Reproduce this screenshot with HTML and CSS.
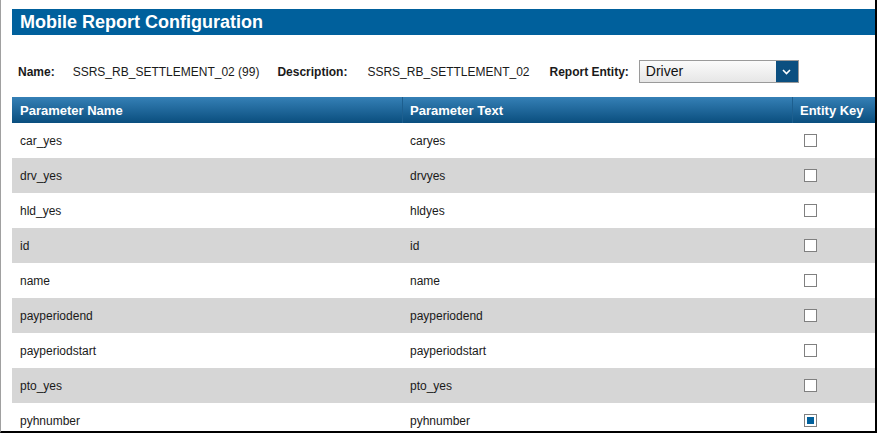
FILE: index.html
```html
<!DOCTYPE html>
<html>
<head>
<meta charset="utf-8">
<link rel="stylesheet" href="styles.css">
</head>
<body>
<div class="window">
  <div class="titlebar">Mobile Report Configuration</div>
  <div class="info">
    <span class="label name-label">Name:</span>
    <span class="value">SSRS_RB_SETTLEMENT_02 (99)</span>
    <span class="label desc-label">Description:</span>
    <span class="value desc-value">SSRS_RB_SETTLEMENT_02</span>
    <span class="label entity-label">Report Entity:</span>
    <div class="select">
      <span class="select-text">Driver</span>
      <span class="select-btn">
        <svg width="9" height="6" viewBox="0 0 9 6"><path d="M1 1 L4.5 4.5 L8 1" fill="none" stroke="#fff" stroke-width="1.6"/></svg>
      </span>
    </div>
  </div>
  <div class="grid">
    <div class="row head">
      <div class="c1">Parameter Name</div>
      <div class="c2">Parameter Text</div>
      <div class="c3">Entity Key</div>
    </div>
    <div class="row"><div class="c1">car_yes</div><div class="c2">caryes</div><div class="c3"><span class="cb"></span></div></div>
    <div class="row alt"><div class="c1">drv_yes</div><div class="c2">drvyes</div><div class="c3"><span class="cb"></span></div></div>
    <div class="row"><div class="c1">hld_yes</div><div class="c2">hldyes</div><div class="c3"><span class="cb"></span></div></div>
    <div class="row alt"><div class="c1">id</div><div class="c2">id</div><div class="c3"><span class="cb"></span></div></div>
    <div class="row"><div class="c1">name</div><div class="c2">name</div><div class="c3"><span class="cb"></span></div></div>
    <div class="row alt"><div class="c1">payperiodend</div><div class="c2">payperiodend</div><div class="c3"><span class="cb"></span></div></div>
    <div class="row"><div class="c1">payperiodstart</div><div class="c2">payperiodstart</div><div class="c3"><span class="cb"></span></div></div>
    <div class="row alt"><div class="c1">pto_yes</div><div class="c2">pto_yes</div><div class="c3"><span class="cb"></span></div></div>
    <div class="row"><div class="c1">pyhnumber</div><div class="c2">pyhnumber</div><div class="c3"><span class="cb checked"></span></div></div>
  </div>
</div>
</body>
</html>
```
FILE: styles.css
```css
html, body {
  margin: 0;
  padding: 0;
  background: #fff;
}
body {
  font-family: "Liberation Sans", Arial, sans-serif;
  color: #1a1a1a;
}
.window {
  box-sizing: border-box;
  width: 877px;
  height: 433px;
  overflow: hidden;
  border-left: 1px solid #a0a0a0;
  border-right: 2px solid #000;
  border-bottom: 2px solid #000;
  padding: 9px 0 0 11px;
  background: #fff;
}
.titlebar {
  height: 26px;
  background: #00609c;
  color: #fff;
  font-weight: bold;
  font-size: 18px;
  line-height: 26px;
  padding-left: 8px;
}
.info {
  display: flex;
  align-items: center;
  height: 23px;
  margin-top: 25px;
  margin-bottom: 14px;
  padding-left: 6px;
  font-size: 12px;
}
.label {
  font-weight: bold;
  margin-right: 19px;
}
.name-label {
  margin-right: 18px;
}
.value {
  margin-right: 18px;
}
.desc-label {
  margin-right: 20px;
}
.desc-value {
  margin-right: 20px;
}
.entity-label {
  margin-right: 10px;
}
.select {
  box-sizing: border-box;
  width: 160px;
  height: 23px;
  border: 1px solid #9a9a9a;
  background: linear-gradient(#fbfbfb, #e6e6e6);
  display: flex;
  align-items: stretch;
}
.select-text {
  flex: 1;
  font-size: 14px;
  line-height: 21px;
  padding-left: 6px;
  color: #111;
}
.select-btn {
  width: 22px;
  background: #0b4f80;
  display: flex;
  align-items: center;
  justify-content: center;
}
.grid {
  font-size: 12px;
}
.row {
  display: flex;
  height: 35px;
  align-items: center;
}
.row.alt {
  background: #d6d6d6;
}
.row.head {
  height: 26px;
  background: linear-gradient(#3580b6, #0a4e7e);
  color: #fff;
  font-weight: bold;
  font-size: 13px;
}
.c1, .c2, .c3 {
  box-sizing: border-box;
  padding-left: 8px;
  height: 100%;
  display: flex;
  align-items: center;
}
.c1 { width: 390px; }
.c2 { width: 390px; }
.c3 { flex: 1; padding-left: 12px; }
.head .c2, .head .c3 {
  border-left: 1px solid #1d5f8f;
}
.head .c2 { padding-left: 7px; }
.head .c3 { padding-left: 7px; }
.cb {
  box-sizing: border-box;
  width: 13px;
  height: 13px;
  border: 1px solid #808080;
  background: #fff;
  display: flex;
  align-items: center;
  justify-content: center;
}
.cb.checked::after {
  content: "";
  width: 7px;
  height: 7px;
  background: #00609c;
}
```
